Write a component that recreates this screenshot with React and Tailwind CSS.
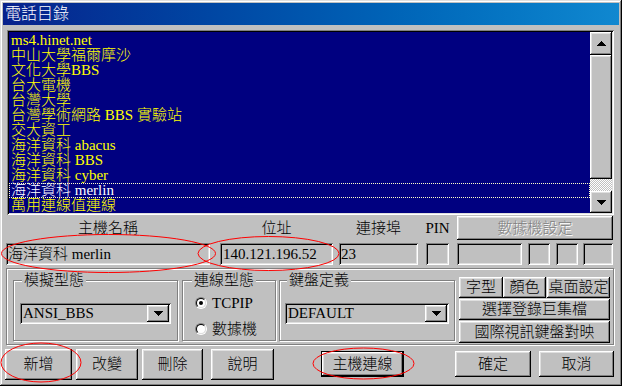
import React from "react";

const raised =
  "bg-[#c0c0c0] shadow-[inset_-1px_-1px_#000,inset_1px_1px_#fff,inset_-2px_-2px_#808080,inset_2px_2px_#dfdfdf]";
const sunken =
  "shadow-[inset_1px_1px_#808080,inset_-1px_-1px_#fff,inset_2px_2px_#000,inset_-2px_-2px_#dfdfdf]";
const etched = "border border-[#808080] shadow-[inset_1px_1px_#fff,1px_1px_#fff]";

function T({ children }) {
  const parts = String(children).split(/([\x20-\x7e]+)/).filter((p) => p !== "");
  return (
    <span className="whitespace-pre">
      {parts.map((p, i) =>
        /^[\x20-\x7e]+$/.test(p) ? (
          <span key={i} className="font-normal">
            {p}
          </span>
        ) : (
          <span key={i}>{p}</span>
        )
      )}
    </span>
  );
}

function Up() {
  return (
    <svg width="9" height="5" viewBox="0 0 9 5" shapeRendering="crispEdges">
      <polygon points="0,5 9,5 4.5,0" fill="#000" />
    </svg>
  );
}
function Down() {
  return (
    <svg width="9" height="5" viewBox="0 0 9 5" shapeRendering="crispEdges">
      <polygon points="0,0 9,0 4.5,5" fill="#000" />
    </svg>
  );
}

function Radio({ checked }) {
  return (
    <span className="w-[12px] h-[12px] rounded-full border border-t-[#808080] border-l-[#808080] border-r-white border-b-white flex items-center justify-center">
      <span className="w-[10px] h-[10px] rounded-full border border-t-black border-l-black border-r-[#dfdfdf] border-b-[#dfdfdf] bg-white flex items-center justify-center">
        {checked && <span className="w-[4px] h-[4px] rounded-full bg-black" />}
      </span>
    </span>
  );
}

function Combo({ value, w }) {
  return (
    <div className={`${w} h-[21px] ${sunken} flex items-center p-[2px]`}>
      <div className="flex-1 pl-[1px] leading-[15px] whitespace-nowrap font-normal">{value}</div>
      <div className={`w-[22px] h-[17px] ${raised} flex items-center justify-center`}>
        <Down />
      </div>
    </div>
  );
}

export default function App() {
  const items = [
    "ms4.hinet.net",
    "中山大學福爾摩沙",
    "文化大學BBS",
    "台大電機",
    "台灣大學",
    "台灣學術網路 BBS 實驗站",
    "交大資工",
    "海洋資科 abacus",
    "海洋資科 BBS",
    "海洋資科 cyber",
    "海洋資科 merlin",
    "萬用連線值連線",
  ];
  return (
    <div className="relative w-[622px] h-[386px] bg-[#c0c0c0] p-[3px] shadow-[inset_-1px_-1px_#000,inset_1px_1px_#dfdfdf,inset_-2px_-2px_#808080,inset_2px_2px_#fff] font-['Liberation_Serif','Noto_Sans_CJK_TC',serif] font-light text-[15px] text-black overflow-hidden">
      <div className="h-[22px] flex items-center pl-[2px] bg-gradient-to-r from-[#08218c] to-[#1088d0] text-white text-[16px] leading-none">
        電話目錄
      </div>
      <div className="pl-[3px] pr-[5px] flex flex-col">
        {/* list box */}
        <div className={`mt-[5px] ml-[1px] h-[185px] p-[2px] flex ${sunken}`}>
          <div className="flex-1 bg-[#000080] pt-[1px] text-[#ffff00] leading-[15px] overflow-hidden">
            {items.map((t, i) =>
              i === 10 ? (
                <div
                  key={i}
                  className="h-[15px] px-[2px] text-white whitespace-nowrap outline-1 outline-dotted outline-[#ffffc8] -outline-offset-1"
                >
                  <T>{t}</T>
                </div>
              ) : (
                <div key={i} className="h-[15px] px-[2px] whitespace-nowrap">
                  <T>{t}</T>
                </div>
              )
            )}
          </div>
          <div className="w-[22px] flex flex-col bg-[#c0c0c0]">
            <div className={`h-[23px] ${raised} flex items-center justify-center`}>
              <Up />
            </div>
            <div className={`h-[124px] ${raised}`} />
            <div className="flex-1 [background-image:repeating-conic-gradient(#fff_0_25%,#c0c0c0_0_50%)] [background-size:2px_2px]" />
            <div className={`h-[22px] ${raised} flex items-center justify-center`}>
              <Down />
            </div>
          </div>
        </div>

        {/* labels and fields */}
        <div className="mt-[1px] flex">
          <div className="w-[204px] flex flex-col">
            <div className="h-[24px] flex items-center justify-center">主機名稱</div>
            <div className={`mt-[3px] h-[22px] ${sunken} flex items-center pl-[2px] whitespace-nowrap`}>
              <T>海洋資科 merlin</T>
            </div>
          </div>
          <div className="ml-[10px] w-[113px] flex flex-col">
            <div className="h-[24px] flex items-center justify-center">位址</div>
            <div className={`mt-[3px] h-[22px] ${sunken} flex items-center pl-[3px] whitespace-nowrap font-normal`}>
              140.121.196.52
            </div>
          </div>
          <div className="ml-[6px] w-[79px] flex flex-col">
            <div className="h-[24px] flex items-center justify-center">連接埠</div>
            <div className={`mt-[3px] h-[22px] ${sunken} flex items-center pl-[2px] font-normal`}>23</div>
          </div>
          <div className="ml-[8px] w-[23px] flex flex-col">
            <div className="h-[24px] flex items-center justify-center font-normal">PIN</div>
            <div className={`mt-[3px] h-[22px] ${sunken}`} />
          </div>
          <div className="ml-[8px] w-[156px] flex flex-col">
            <div
              className={`h-[24px] ${raised} flex items-center justify-center text-[#808080] [text-shadow:1px_1px_0_#fff]`}
            >
              數據機設定
            </div>
            <div className="mt-[3px] h-[22px] flex">
              <div className={`w-[65px] ${sunken}`} />
              <div className={`ml-[6px] w-[22px] ${sunken}`} />
              <div className={`ml-[6px] w-[22px] ${sunken}`} />
              <div className={`ml-[5px] w-[30px] ${sunken}`} />
            </div>
          </div>
        </div>

        {/* options frame */}
        <div className={`mt-[3px] h-[77px] ${etched} flex items-start pt-[4px]`}>
          <fieldset className={`ml-[6px] w-[165px] h-[68px] ${etched} px-[6px]`}>
            <legend className="ml-[2px] px-[2px] leading-[15px] bg-[#c0c0c0]">模擬型態</legend>
            <div className="mt-[15px]">
              <Combo value="ANSI_BBS" w="w-full" />
            </div>
          </fieldset>
          <fieldset className={`ml-[4px] w-[94px] h-[68px] ${etched} pl-[12px]`}>
            <legend className="-ml-[3px] px-[2px] leading-[15px] bg-[#c0c0c0]">連線型態</legend>
            <div className="mt-[8px] h-[14px] flex items-center">
              <Radio checked />
              <span className="ml-[5px] leading-[15px] font-normal">TCPIP</span>
            </div>
            <div className="mt-[12px] h-[14px] flex items-center">
              <Radio />
              <span className="ml-[5px] leading-[15px]">數據機</span>
            </div>
          </fieldset>
          <fieldset className={`ml-[3px] w-[176px] h-[68px] ${etched} px-[5px]`}>
            <legend className="ml-[2px] px-[2px] leading-[15px] bg-[#c0c0c0]">鍵盤定義</legend>
            <div className="mt-[15px]">
              <Combo value="DEFAULT" w="w-full" />
            </div>
          </fieldset>
          <div className="ml-[4px] mt-[4px] w-[151px] flex flex-col">
            <div className="h-[21px] flex">
              <div className={`w-[44px] ${raised} flex items-center justify-center`}>字型</div>
              <div className={`w-[43px] ${raised} flex items-center justify-center`}>顏色</div>
              <div className={`ml-[1px] w-[63px] ${raised} flex items-center justify-center whitespace-nowrap`}>
                桌面設定
              </div>
            </div>
            <div className={`mt-[1px] h-[21px] ${raised} flex items-center justify-center`}>選擇登錄巨集檔</div>
            <div className={`mt-[1px] h-[22px] ${raised} flex items-center justify-center`}>國際視訊鍵盤對映</div>
          </div>
        </div>

        {/* bottom buttons */}
        <div className="mt-[3px] h-[32px] flex items-center">
          <div className={`-ml-[1px] w-[67px] h-[31px] ${raised} flex items-center justify-center`}>新增</div>
          <div className={`ml-[4px] w-[62px] h-[31px] ${raised} flex items-center justify-center`}>改變</div>
          <div className={`ml-[4px] w-[61px] h-[31px] ${raised} flex items-center justify-center`}>刪除</div>
          <div className={`ml-[8px] w-[63px] h-[31px] ${raised} flex items-center justify-center`}>說明</div>
          <div className="ml-[47px] w-[83px] h-[26px] border border-black">
            <div className={`w-full h-full ${raised} flex items-center justify-center`}>主機連線</div>
          </div>
          <div className={`ml-[51px] w-[76px] h-[26px] ${raised} flex items-center justify-center`}>確定</div>
          <div className={`ml-[8px] w-[75px] h-[26px] ${raised} flex items-center justify-center`}>取消</div>
        </div>
      </div>

      {/* red annotation ellipses */}
      <svg
        className="absolute inset-0 pointer-events-none"
        width="622"
        height="386"
        viewBox="0 0 622 386"
      >
        <g fill="none" stroke="#ff0000" strokeWidth="1">
          <ellipse cx="108.5" cy="253.5" rx="107" ry="19" />
          <ellipse cx="268.5" cy="253.5" rx="70.5" ry="17" />
          <ellipse cx="41" cy="362.5" rx="40" ry="19.5" />
          <ellipse cx="363.5" cy="363.5" rx="50.5" ry="15.5" />
        </g>
      </svg>
    </div>
  );
}
